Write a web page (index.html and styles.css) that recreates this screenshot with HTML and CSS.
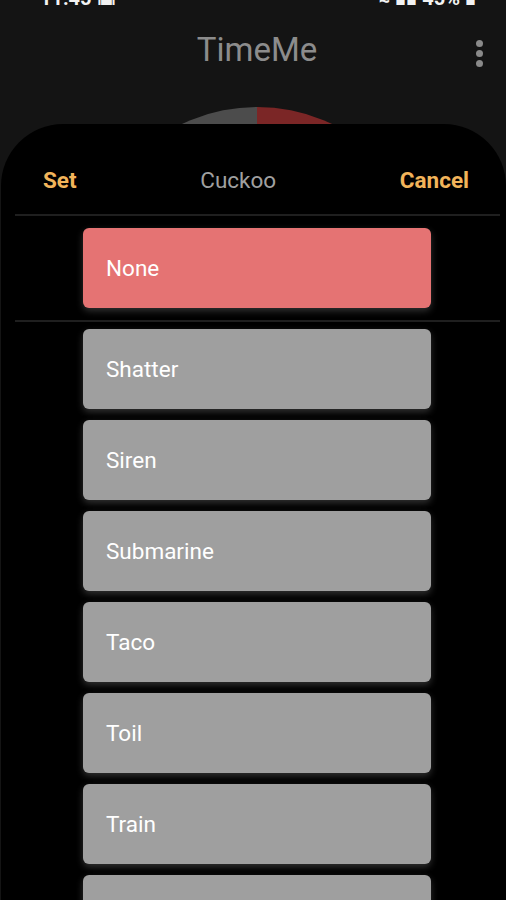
FILE: index.html
```html
<!DOCTYPE html>
<html lang="en">
<head>
    <meta charset="UTF-8">
    <meta name="viewport" content="width=device-width, initial-scale=1.0">
    <title>TimeMe</title>
    <link rel="stylesheet" href="styles.css">
</head>
<body>

<div class="screen">
    <div class="status-bar">
        <span class="status-left">11:45 &#9635;</span>
        <span class="status-right">&#8776; &#9646;&#9646; 45% &#9646;</span>
    </div>

    <div class="app-bar">
        <span class="app-title">TimeMe</span>
        <span class="menu">
            <span class="dot"></span>
            <span class="dot"></span>
            <span class="dot"></span>
        </span>
    </div>

    <div class="gauge">
        <div class="gauge-left"></div>
        <div class="gauge-right"></div>
    </div>

    <div class="sheet">
        <div class="sheet-header">
            <button class="action">Set</button>
            <span class="sheet-title">Cuckoo</span>
            <button class="action">Cancel</button>
        </div>
        <div class="divider"></div>
        <div class="selected">
            <div class="option option-active">None</div>
        </div>
        <div class="divider"></div>
        <div class="options">
            <div class="option">Shatter</div>
            <div class="option">Siren</div>
            <div class="option">Submarine</div>
            <div class="option">Taco</div>
            <div class="option">Toil</div>
            <div class="option">Train</div>
            <div class="option">Trumpet</div>
        </div>
    </div>
</div>

</body>
</html>
```

FILE: styles.css
```css
body {
    margin: 0;
    background-color: #141414;
    font-family: Roboto, "Noto Sans", sans-serif;
    overflow: hidden;
}
.screen {
    position: relative;
    width: 506px;
    height: 900px;
    overflow: hidden;
}
.status-bar {
    height: 5px;
    overflow: hidden;
    display: flex;
    justify-content: space-between;
    align-items: flex-end;
    padding: 0 30px 0 40px;
    color: #f2f2f2;
    font-size: 20px;
    font-weight: bold;
}
.status-left,
.status-right {
    line-height: 20px;
    margin-bottom: -3px;
    white-space: nowrap;
}
.app-bar {
    height: 89px;
    display: flex;
    justify-content: center;
    align-items: center;
    position: relative;
}
.app-title {
    font-size: 33px;
    color: #8c8c8c;
    margin-top: -1px;
    margin-left: 8px;
}
.menu {
    position: absolute;
    right: 23px;
    top: 35px;
    display: flex;
    flex-direction: column;
    gap: 3px;
}
.dot {
    width: 7px;
    height: 7px;
    border-radius: 50%;
    background-color: #8a8a8a;
}
.gauge {
    position: absolute;
    left: 83px;
    top: 107px;
    width: 348px;
    height: 348px;
    border-radius: 50%;
    overflow: hidden;
    display: flex;
}
.gauge-left {
    flex: 1;
    background-color: #4c4c4c;
}
.gauge-right {
    flex: 1;
    background-color: #7b2626;
}
.sheet {
    position: absolute;
    left: 1px;
    right: 0;
    top: 124px;
    bottom: 0;
    background-color: #000;
    border-radius: 62px 62px 0 0;
}
.sheet-header {
    display: flex;
    justify-content: space-between;
    align-items: center;
    padding: 42px 37px 20px 42px;
    height: 28px;
}
.action {
    background: none;
    border: none;
    padding: 0;
    font-family: inherit;
    font-size: 22.5px;
    font-weight: bold;
    color: #f2b45a;
    cursor: pointer;
}
.sheet-title {
    font-size: 22.5px;
    color: #a0a0a0;
}
.divider {
    height: 2px;
    margin: 0 6px 0 14px;
    background-color: #1f1f1f;
}
.selected {
    padding: 12px 0;
}
.options {
    display: flex;
    flex-direction: column;
    gap: 11px;
    padding-top: 7px;
}
.option {
    margin-left: 82px;
    width: 348px;
    height: 80px;
    box-sizing: border-box;
    padding-left: 23px;
    display: flex;
    align-items: center;
    font-size: 22.5px;
    color: #fff;
    background-color: #9f9f9f;
    border-radius: 6px;
    box-shadow: 0 3px 7px rgba(70, 70, 70, 0.7);
}
.option-active {
    background-color: #e57373;
}
```
